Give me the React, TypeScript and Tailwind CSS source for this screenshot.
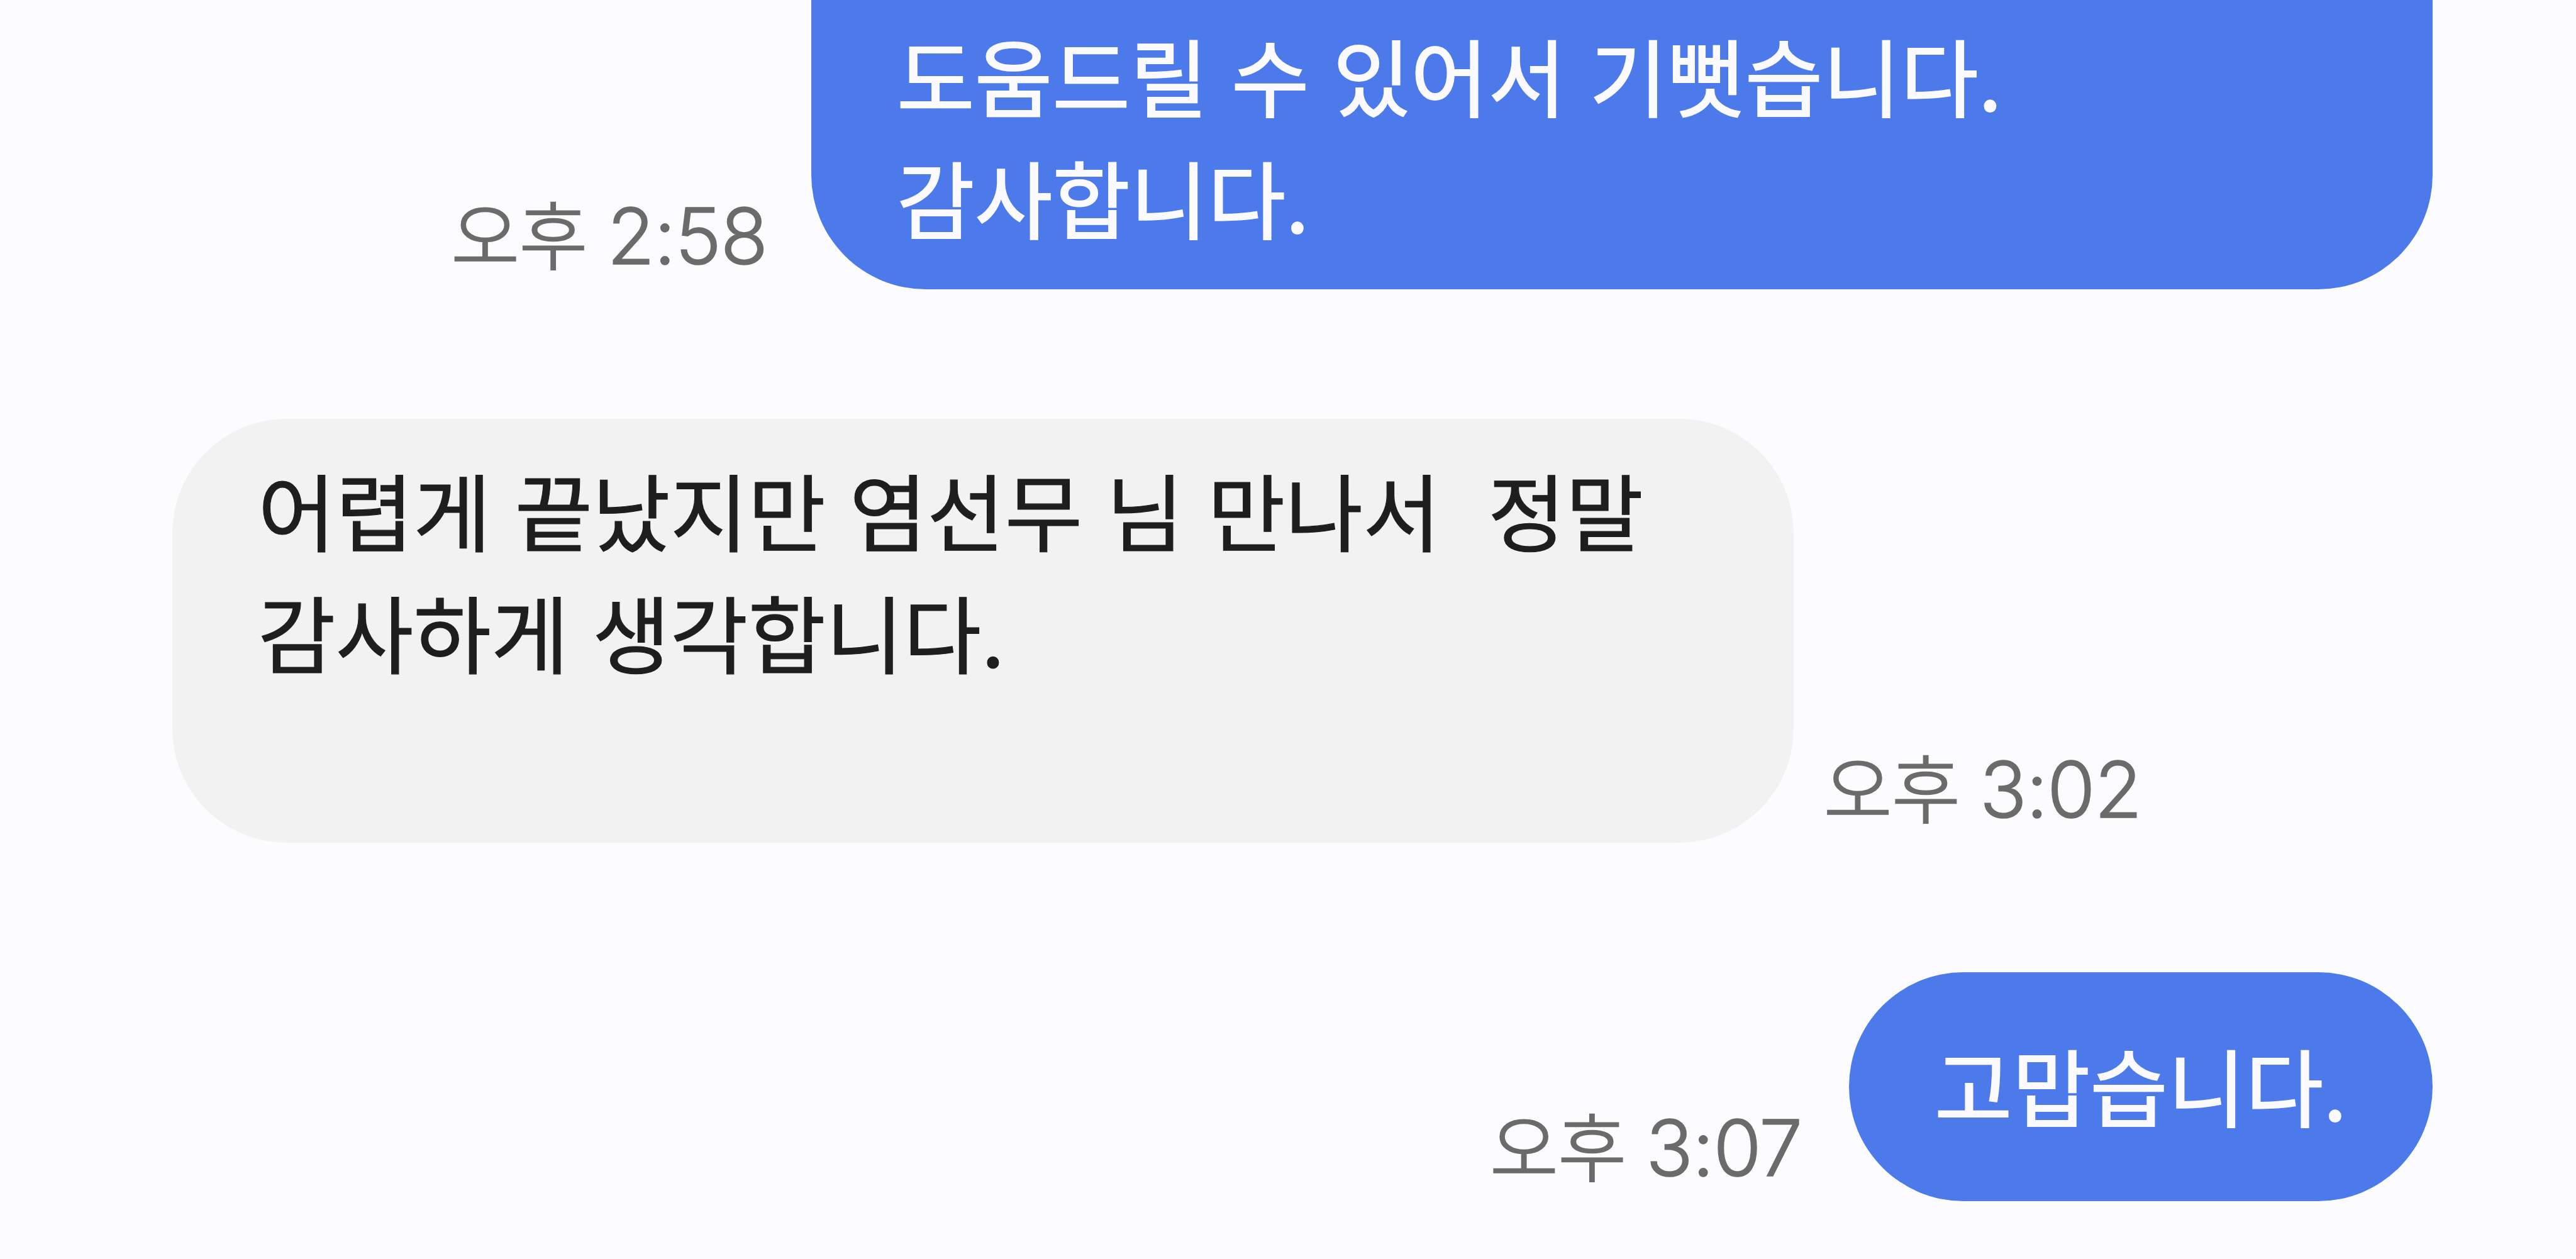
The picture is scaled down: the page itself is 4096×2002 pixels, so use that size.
import clsx from "clsx";

interface MessageProps {
    lines: string[]
    time: string
    sent?: boolean
    bubbleClass: string
    timeClass: string
}

const Message = ({ lines, time, sent, bubbleClass, timeClass }: MessageProps) => {
    const [period, clock] = time.split(' ');

    return (
        <div className={clsx("flex items-end", sent ? "flex-row-reverse" : "flex-row")}>
            <div className={clsx("shrink-0 px-[136px] text-[134.4px] leading-[193.7px] [word-spacing:7.4px]", sent ? "bg-[#4c7aea] text-[#fafaff] [-webkit-text-stroke:2px_#fafaff]" : "bg-[#f2f2f2] text-[#1e1e1e] [-webkit-text-stroke:1.2px_#1e1e1e]", bubbleClass)}>
                {lines.map((line, i) => (
                    <p key={i} className="whitespace-pre min-h-[193.7px]">{line}</p>
                ))}
            </div>
            <div className={clsx("shrink-0 mb-[5px] flex items-baseline whitespace-nowrap text-[#6b6b6b] font-light leading-[160px]", timeClass)}>
                <span className="text-[117.8px] [-webkit-text-stroke:2.6px_#6b6b6b]">{period}</span>
                <span className="ml-[31px] text-[124px] tracking-[-1.4px] [-webkit-text-stroke:1.6px_#6b6b6b] font-['Inter','Noto_Sans_CJK_KR',sans-serif]">{clock}</span>
            </div>
        </div>
    )
};

const App = () => {
    return (
        <main className="flex h-screen w-full flex-col overflow-hidden bg-[#fcfcff] pl-[274px] pr-[228px] font-['Noto_Sans_CJK_KR',sans-serif]">
            <Message
                sent
                lines={["도움드릴 수 있어서 기뻣습니다.", "감사합니다."]}
                time="오후 2:58"
                bubbleClass="w-[2578px] h-[460px] pt-[21px] rounded-b-[182px]"
                timeClass="mr-[70px]"
            />
            <div className="mt-[206px]">
                <Message
                    lines={["어렵게 끝났지만 염선무 님 만나서  정말", "감사하게 생각합니다.", ""]}
                    time="오후 3:02"
                    bubbleClass="w-[2578px] h-[674px] pt-[46px] rounded-[182px]"
                    timeClass="ml-[48px]"
                />
            </div>
            <div className="mt-[205.5px]">
                <Message
                    sent
                    lines={["고맙습니다."]}
                    time="오후 3:07"
                    bubbleClass="w-[928px] h-[364px] pt-[81px] rounded-[182px]"
                    timeClass="mr-[75px]"
                />
            </div>
        </main>
    )
};

export default App;
